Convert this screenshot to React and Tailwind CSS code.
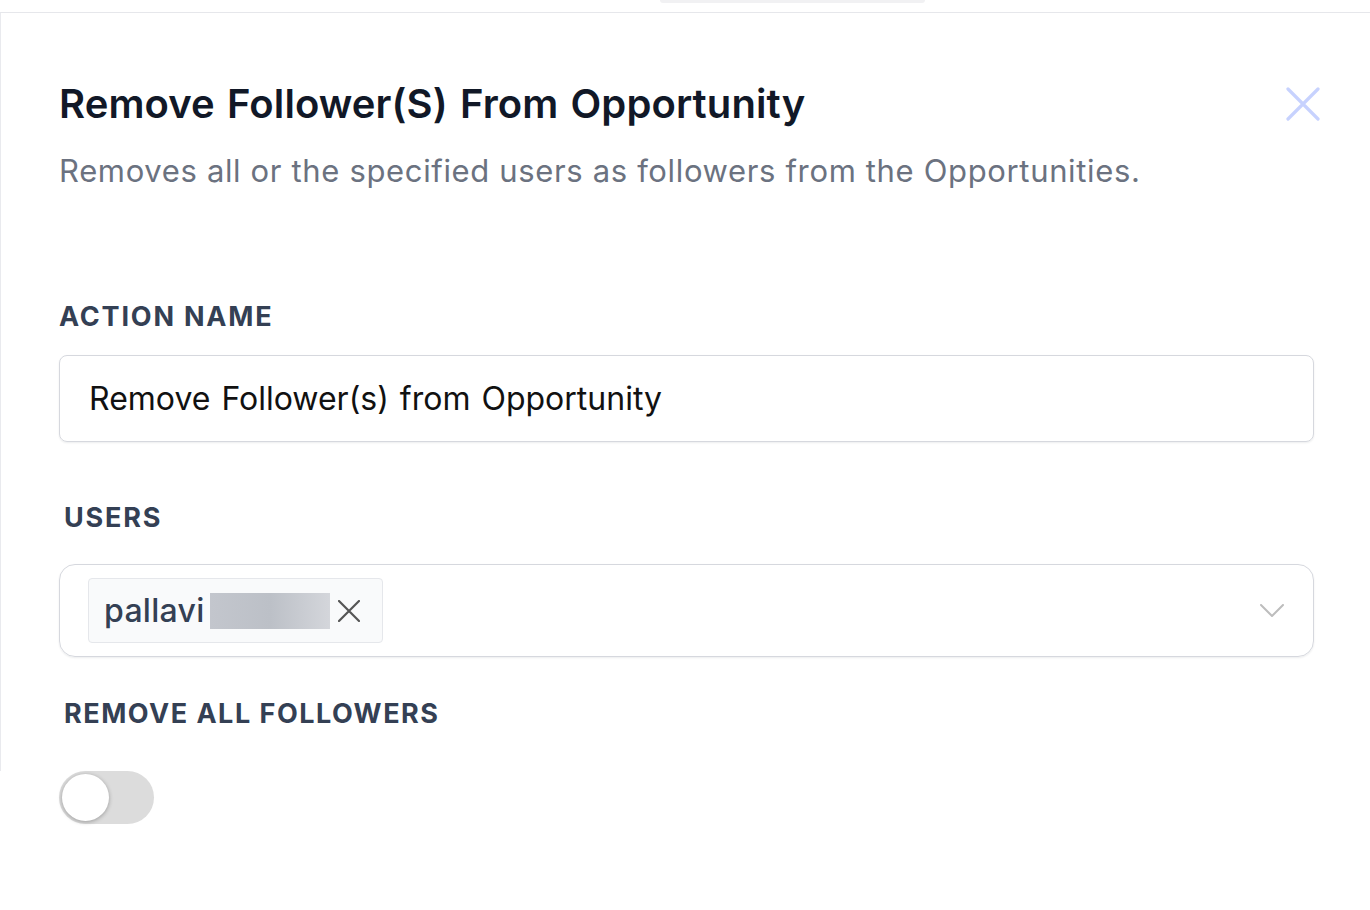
import React from "react";

export default function App() {
  return (
    <div
      className="relative w-[1370px] h-[910px] bg-white overflow-hidden"
      style={{ fontFamily: "Inter, 'Noto Sans', sans-serif" }}
    >
      {/* faint shadow at top */}
      <div className="absolute left-[660px] top-0 w-[265px] h-[3px] bg-[#f1f1f3] rounded-b" />
      <div className="mt-[12px] border-t border-[#e6e7eb] h-[898px] flex">
        <div className="w-px h-[758px] bg-[#e9eaee]" />
        <div className="flex-1 flex flex-col pl-[58px] pr-[56px]">
          <div className="flex items-start justify-between mt-[67px]">
            <h1 className="text-[40px] leading-[48px] font-semibold text-[#111827] tracking-[0.1px] [word-spacing:2px]">
              Remove Follower(S) From Opportunity
            </h1>
            <svg
              className="mt-[7px] mr-[-6px]"
              width="34"
              height="34"
              viewBox="0 0 34 34"
              fill="none"
              stroke="#c7d2fe"
              strokeWidth="3.2"
              strokeLinecap="round"
            >
              <path d="M2 2 L32 32 M32 2 L2 32" />
            </svg>
          </div>
          <p className="mt-[25px] text-[31px] leading-[36px] text-[#6b7280] tracking-[0.65px]">
            Removes all or the specified users as followers from the Opportunities.
          </p>

          <label className="mt-[112px] text-[27px] leading-[31px] font-bold tracking-[1.8px] text-[#344054]">
            ACTION NAME
          </label>
          <div className="mt-[23px] h-[87px] rounded-[8px] border border-[#d6d8de] shadow-[0_1px_2px_rgba(16,24,40,0.08)] flex items-center pl-[29px]">
            <span className="text-[32px] text-[#111111] [word-spacing:2px]">
              Remove Follower(s) from Opportunity
            </span>
          </div>

          <label className="mt-[60px] ml-[5px] text-[27px] leading-[31px] font-bold tracking-[1.8px] text-[#344054]">
            USERS
          </label>
          <div className="mt-[31px] h-[93px] rounded-[16px] border border-[#d6d8de] shadow-[0_1px_2px_rgba(16,24,40,0.08)] flex items-center pl-[28px] pr-[28px]">
            <div className="h-[65px] rounded-[4px] border border-[#e5e7eb] bg-[#f9fafb] flex items-center pl-[15px] pr-[22px]">
              <span className="text-[32px] font-medium text-[#344054] tracking-[0.3px]">pallavi</span>
              <span className="ml-[5px] w-[120px] h-[36px] bg-gradient-to-r from-[#c3c6cd] via-[#bcc0c7] to-[#d4d6db]" />
              <svg
                className="ml-[8px]"
                width="22"
                height="22"
                viewBox="0 0 22 22"
                stroke="#555"
                strokeWidth="2.2"
                strokeLinecap="round"
              >
                <path d="M1 1 L21 21 M21 1 L1 21" />
              </svg>
            </div>
            <div className="flex-1" />
            <svg
              className="mr-[1px]"
              width="24"
              height="14"
              viewBox="0 0 24 14"
              fill="none"
              stroke="#bdbdbd"
              strokeWidth="2"
              strokeLinecap="round"
              strokeLinejoin="round"
            >
              <path d="M1 1 L12 12 L23 1" />
            </svg>
          </div>

          <label className="mt-[41px] ml-[5px] text-[27px] leading-[31px] font-bold tracking-[1.5px] text-[#344054]">
            REMOVE ALL FOLLOWERS
          </label>
          <div className="mt-[42px] relative w-[95px] h-[53px] rounded-full bg-[#dcdcdc]">
            <div className="absolute left-[3px] top-[3px] w-[47px] h-[47px] rounded-full bg-white shadow-[0_1px_4px_rgba(0,0,0,0.3)]" />
          </div>
        </div>
      </div>
    </div>
  );
}
